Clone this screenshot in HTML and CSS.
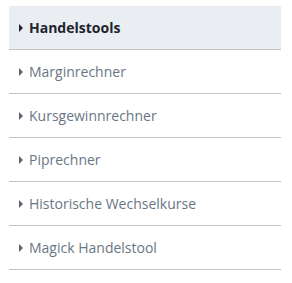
FILE: index.html
```html
<!DOCTYPE html>
<html>
<head>
  <title>Handelstools</title>
  <link rel="stylesheet" href="styles.css">
</head>
<body>
  <ul class="tools-menu">
    <li class="active"><a href="#">Handelstools</a></li>
    <li><a href="#">Marginrechner</a></li>
    <li><a href="#">Kursgewinnrechner</a></li>
    <li><a href="#">Piprechner</a></li>
    <li><a href="#">Historische Wechselkurse</a></li>
    <li><a href="#">Magick Handelstool</a></li>
  </ul>
</body>
</html>
```

FILE: styles.css
```css
body {
  margin: 0;
  padding: 6px 11px 0 9px;
  background-color: #fff;
  font-family: "Open Sans", Arial, sans-serif;
  font-size: 14px;
}
.tools-menu {
  list-style: none;
  margin: 0;
  padding: 0;
}
.tools-menu li {
  border-bottom: 1px solid #c4c4c4;
}
.tools-menu a {
  display: flex;
  align-items: center;
  padding: 12px 10px;
  line-height: 19px;
  color: #6a7684;
  text-decoration: none;
}
.tools-menu a::before {
  content: "";
  width: 0;
  height: 0;
  border-left: 4px solid #5e6166;
  border-top: 4px solid transparent;
  border-bottom: 4px solid transparent;
  margin-right: 6px;
}
.tools-menu li.active {
  background-color: #eaeef2;
}
.tools-menu li.active a {
  color: #1e2530;
  font-weight: bold;
}
.tools-menu li.active a::before {
  border-left-color: #1e2530;
}
```
